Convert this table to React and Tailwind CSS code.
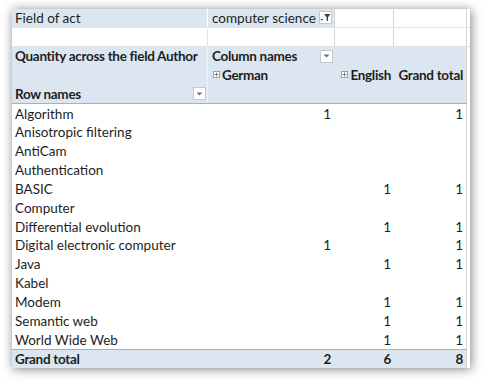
const rows = [
  ["Algorithm", "1", "", "1"],
  ["Anisotropic filtering", "", "", ""],
  ["AntiCam", "", "", ""],
  ["Authentication", "", "", ""],
  ["BASIC", "", "1", "1"],
  ["Computer", "", "", ""],
  ["Differential evolution", "", "1", "1"],
  ["Digital electronic computer", "1", "", "1"],
  ["Java", "", "1", "1"],
  ["Kabel", "", "", ""],
  ["Modem", "", "1", "1"],
  ["Semantic web", "", "1", "1"],
  ["World Wide Web", "", "1", "1"],
];

function DropButton() {
  return (
    <span className="flex h-[13px] w-[13px] shrink-0 items-center justify-center border border-[#c8c8c8] bg-white">
      <svg width="7" height="4" viewBox="0 0 7 4">
        <path d="M0.5 0.5 L3.5 3.5 L6.5 0.5 Z" fill="#707070" />
      </svg>
    </span>
  );
}

function FilterButton() {
  return (
    <span className="flex h-[13px] w-[13px] shrink-0 items-center justify-center border border-[#c8c8c8] bg-white">
      <svg width="11" height="9" viewBox="0 0 11 9">
        <path d="M0.5 6 L3.5 6 L2 7.8 Z" fill="#404040" />
        <path d="M4 1 L10.5 1 L8 4.2 L8 8.2 L6.6 7.3 L6.6 4.2 Z" fill="#404040" />
      </svg>
    </span>
  );
}

function PlusBox() {
  return (
    <span className="mr-[2px] inline-flex h-[7px] w-[7px] shrink-0 items-center justify-center border border-[#a0a0a0] bg-white">
      <svg width="5" height="5" viewBox="0 0 5 5">
        <path d="M2.5 0.5 V4.5 M0.5 2.5 H4.5" stroke="#808080" strokeWidth="1" />
      </svg>
    </span>
  );
}

const rowH = "h-[18.85px]";

export default function App() {
  return (
    <div
      className="h-[381px] w-[484px] whitespace-nowrap bg-white pl-[12px] pt-[9px] text-[13.5px] text-[#1e1e1e]"
      style={{ fontFamily: "Lato, 'Open Sans', sans-serif" }}
    >
      <div className="flex h-[359px] w-[458px] flex-col overflow-hidden bg-white shadow-[1px_1px_10px_rgba(0,0,0,0.5)]">
        {/* page field */}
        <div className={`flex ${rowH} border-b border-[#e2e2e2]`}>
          <div className="flex w-[196px] items-center border-r border-[#ffffff] bg-[#dce6f1] pl-[3px]">
            Field of act
          </div>
          <div className="flex w-[127px] items-center justify-between border-r border-[#d4d4d4] bg-[#dce6f1] pl-[4px] pr-[2px]">
            <span>computer science</span>
            <FilterButton />
          </div>
          <div className="w-[59px] border-r border-[#d4d4d4]" />
          <div className="w-[73px] border-r border-[#d4d4d4]" />
        </div>
        <div className={`flex ${rowH} border-b border-[#e2e2e2]`}>
          <div className="w-[196px] border-r border-[#e2e2e2]" />
          <div className="w-[127px] border-r border-[#d4d4d4]" />
          <div className="w-[59px] border-r border-[#d4d4d4]" />
          <div className="w-[73px] border-r border-[#d4d4d4]" />
        </div>

        {/* header */}
        <div className="flex w-[455px] flex-col border-b border-[#95b3d7] bg-[#dce6f1] font-bold tracking-[-0.3px]">
          <div className={`flex ${rowH}`}>
            <div className="flex w-[196px] items-center border-r border-[#eef3f9] pl-[3px]">
              Quantity across the field Author
            </div>
            <div className="flex w-[127px] items-center justify-between pl-[4px] pr-[2px]">
              <span>Column names</span>
              <DropButton />
            </div>
            <div className="w-[59px]" />
            <div className="w-[73px] border-r border-[#d4d4d4]" />
          </div>
          <div className={`flex ${rowH}`}>
            <div className="w-[196px] border-r border-[#eef3f9]" />
            <div className="flex w-[127px] items-center pl-[5px]">
              <PlusBox />
              German
            </div>
            <div className="flex w-[59px] items-center justify-end pr-[3px]">
              <PlusBox />
              English
            </div>
            <div className="flex w-[73px] items-center justify-end border-r border-[#d4d4d4] pr-[3px]">
              Grand total
            </div>
          </div>
          <div className={`flex ${rowH}`}>
            <div className="flex w-[196px] items-center justify-between border-r border-[#eef3f9] pl-[3px] pr-[1px]">
              <span>Row names</span>
              <DropButton />
            </div>
            <div className="w-[127px]" />
            <div className="w-[59px]" />
            <div className="w-[73px] border-r border-[#d4d4d4]" />
          </div>
        </div>

        {/* body */}
        {rows.map((r) => (
          <div key={r[0]} className={`flex ${rowH}`}>
            <div className="flex w-[196px] items-center pl-[3px]">{r[0]}</div>
            <div className="flex w-[127px] items-center justify-end pr-[4px]">{r[1]}</div>
            <div className="flex w-[59px] items-center justify-end pr-[3px]">{r[2]}</div>
            <div className="flex w-[73px] items-center justify-end border-r border-[#d4d4d4] pr-[3px]">
              {r[3]}
            </div>
          </div>
        ))}

        <div className={`flex ${rowH} w-[455px] border-t border-[#95b3d7] bg-[#dce6f1] font-bold tracking-[-0.3px]`}>
          <div className="flex w-[196px] items-center pl-[3px]">Grand total</div>
          <div className="flex w-[127px] items-center justify-end pr-[4px]">2</div>
          <div className="flex w-[59px] items-center justify-end pr-[3px]">6</div>
          <div className="flex w-[73px] items-center justify-end border-r border-[#d4d4d4] pr-[3px]">8</div>
        </div>
      </div>
    </div>
  );
}
